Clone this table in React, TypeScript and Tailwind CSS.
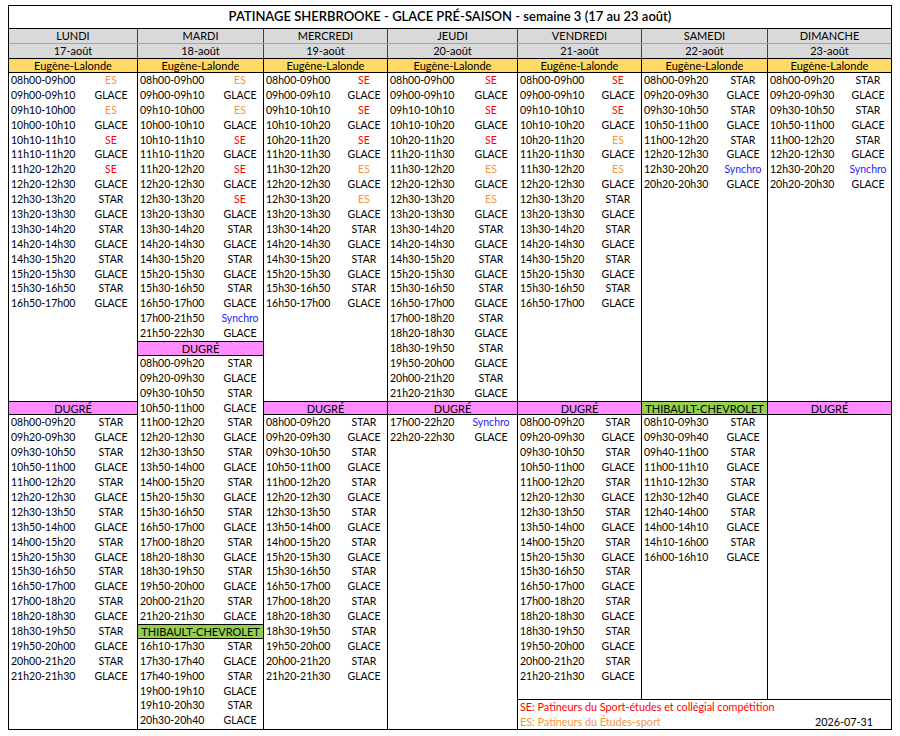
type Item =
  | { kind: 'row'; t: string; k: string }
  | { kind: 'blank' }
  | { kind: 'venue'; name: string; tone: 'pink' | 'green' };

const r = (t: string, k: string): Item => ({ kind: 'row', t, k });
const blank = (n: number): Item[] => Array.from({ length: n }, () => ({ kind: 'blank' }));
const venue = (name: string, tone: 'pink' | 'green'): Item => ({ kind: 'venue', name, tone });

// horaire standard a DUGRÉ (lundi, mardi, mercredi, vendredi)
const DUGRE_STD: Item[] = [
  r('08h00-09h20', 'STAR'),
  r('09h20-09h30', 'GLACE'),
  r('09h30-10h50', 'STAR'),
  r('10h50-11h00', 'GLACE'),
  r('11h00-12h20', 'STAR'),
  r('12h20-12h30', 'GLACE'),
  r('12h30-13h50', 'STAR'),
  r('13h50-14h00', 'GLACE'),
  r('14h00-15h20', 'STAR'),
  r('15h20-15h30', 'GLACE'),
  r('15h30-16h50', 'STAR'),
  r('16h50-17h00', 'GLACE'),
  r('17h00-18h20', 'STAR'),
  r('18h20-18h30', 'GLACE'),
  r('18h30-19h50', 'STAR'),
  r('19h50-20h00', 'GLACE'),
  r('20h00-21h20', 'STAR'),
  r('21h20-21h30', 'GLACE'),
];

const AFTERNOON: Item[] = [
  r('13h30-14h20', 'STAR'),
  r('14h20-14h30', 'GLACE'),
  r('14h30-15h20', 'STAR'),
  r('15h20-15h30', 'GLACE'),
  r('15h30-16h50', 'STAR'),
  r('16h50-17h00', 'GLACE'),
];

const WEEKEND: Item[] = [
  r('08h00-09h20', 'STAR'),
  r('09h20-09h30', 'GLACE'),
  r('09h30-10h50', 'STAR'),
  r('10h50-11h00', 'GLACE'),
  r('11h00-12h20', 'STAR'),
  r('12h20-12h30', 'GLACE'),
  r('12h30-20h20', 'Synchro'),
  r('20h20-20h30', 'GLACE'),
];

type Day = { name: string; date: string; typeW: string; span: string; items: Item[] };

const DAYS: Day[] = [
  {
    name: 'LUNDI',
    date: '17-août',
    typeW: 'w-[52px]',
    span: 'row-span-2',
    items: [
      r('08h00-09h00', 'ES'),
      r('09h00-09h10', 'GLACE'),
      r('09h10-10h00', 'ES'),
      r('10h00-10h10', 'GLACE'),
      r('10h10-11h10', 'SE'),
      r('11h10-11h20', 'GLACE'),
      r('11h20-12h20', 'SE'),
      r('12h20-12h30', 'GLACE'),
      r('12h30-13h20', 'STAR'),
      r('13h20-13h30', 'GLACE'),
      ...AFTERNOON,
      ...blank(6),
      venue('DUGRÉ', 'pink'),
      ...DUGRE_STD,
    ],
  },
  {
    name: 'MARDI',
    date: '18-août',
    typeW: 'w-[46px]',
    span: 'row-span-2',
    items: [
      r('08h00-09h00', 'ES'),
      r('09h00-09h10', 'GLACE'),
      r('09h10-10h00', 'ES'),
      r('10h00-10h10', 'GLACE'),
      r('10h10-11h10', 'SE'),
      r('11h10-11h20', 'GLACE'),
      r('11h20-12h20', 'SE'),
      r('12h20-12h30', 'GLACE'),
      r('12h30-13h20', 'SE'),
      r('13h20-13h30', 'GLACE'),
      ...AFTERNOON,
      r('17h00-21h50', 'Synchro'),
      r('21h50-22h30', 'GLACE'),
      venue('DUGRÉ', 'pink'),
      ...DUGRE_STD,
      venue('THIBAULT-CHEVROLET', 'green'),
      r('16h10-17h30', 'STAR'),
      r('17h30-17h40', 'GLACE'),
      r('17h40-19h00', 'STAR'),
      r('19h00-19h10', 'GLACE'),
      r('19h10-20h30', 'STAR'),
      r('20h30-20h40', 'GLACE'),
    ],
  },
  {
    name: 'MERCREDI',
    date: '19-août',
    typeW: 'w-[46px]',
    span: 'row-span-2',
    items: [
      r('08h00-09h00', 'SE'),
      r('09h00-09h10', 'GLACE'),
      r('09h10-10h10', 'SE'),
      r('10h10-10h20', 'GLACE'),
      r('10h20-11h20', 'SE'),
      r('11h20-11h30', 'GLACE'),
      r('11h30-12h20', 'ES'),
      r('12h20-12h30', 'GLACE'),
      r('12h30-13h20', 'ES'),
      r('13h20-13h30', 'GLACE'),
      ...AFTERNOON,
      ...blank(6),
      venue('DUGRÉ', 'pink'),
      ...DUGRE_STD,
    ],
  },
  {
    name: 'JEUDI',
    date: '20-août',
    typeW: 'w-[52px]',
    span: 'row-span-2',
    items: [
      r('08h00-09h00', 'SE'),
      r('09h00-09h10', 'GLACE'),
      r('09h10-10h10', 'SE'),
      r('10h10-10h20', 'GLACE'),
      r('10h20-11h20', 'SE'),
      r('11h20-11h30', 'GLACE'),
      r('11h30-12h20', 'ES'),
      r('12h20-12h30', 'GLACE'),
      r('12h30-13h20', 'ES'),
      r('13h20-13h30', 'GLACE'),
      ...AFTERNOON,
      r('17h00-18h20', 'STAR'),
      r('18h20-18h30', 'GLACE'),
      r('18h30-19h50', 'STAR'),
      r('19h50-20h00', 'GLACE'),
      r('20h00-21h20', 'STAR'),
      r('21h20-21h30', 'GLACE'),
      venue('DUGRÉ', 'pink'),
      r('17h00-22h20', 'Synchro'),
      r('22h20-22h30', 'GLACE'),
    ],
  },
  {
    name: 'VENDREDI',
    date: '21-août',
    typeW: 'w-[46px]',
    span: '',
    items: [
      r('08h00-09h00', 'SE'),
      r('09h00-09h10', 'GLACE'),
      r('09h10-10h10', 'SE'),
      r('10h10-10h20', 'GLACE'),
      r('10h20-11h20', 'ES'),
      r('11h20-11h30', 'GLACE'),
      r('11h30-12h20', 'ES'),
      r('12h20-12h30', 'GLACE'),
      r('12h30-13h20', 'STAR'),
      r('13h20-13h30', 'GLACE'),
      ...AFTERNOON,
      ...blank(6),
      venue('DUGRÉ', 'pink'),
      ...DUGRE_STD,
    ],
  },
  {
    name: 'SAMEDI',
    date: '22-août',
    typeW: 'w-[48px]',
    span: '',
    items: [
      ...WEEKEND,
      ...blank(14),
      venue('THIBAULT-CHEVROLET', 'green'),
      r('08h10-09h30', 'STAR'),
      r('09h30-09h40', 'GLACE'),
      r('09h40-11h00', 'STAR'),
      r('11h00-11h10', 'GLACE'),
      r('11h10-12h30', 'STAR'),
      r('12h30-12h40', 'GLACE'),
      r('12h40-14h00', 'STAR'),
      r('14h00-14h10', 'GLACE'),
      r('14h10-16h00', 'STAR'),
      r('16h00-16h10', 'GLACE'),
    ],
  },
  {
    name: 'DIMANCHE',
    date: '23-août',
    typeW: 'w-[46px]',
    span: '',
    items: [...WEEKEND, ...blank(14), venue('DUGRÉ', 'pink')],
  },
];

const COLS = 'grid grid-cols-[128px_126px_124px_130px_124px_126px_124px]';

function typeColor(k: string) {
  if (k === 'ES') return 'text-[#f7963a]';
  if (k === 'SE') return 'text-[#ff0000]';
  if (k === 'Synchro') return 'text-[#2222ff]';
  return 'text-black';
}

function DayColumn({ day, first }: { day: Day; first: boolean }) {
  return (
    <div className={`flex flex-col ${day.span} ${first ? '' : 'border-l border-black'}`}>
      {day.items.map((it, i) => {
        if (it.kind === 'blank') return <div key={i} className="h-[14.9px] shrink-0" />;
        if (it.kind === 'venue')
          return (
            <div
              key={i}
              className={`h-[14.9px] shrink-0 border-y border-black text-center text-[11px] leading-[13px] ${
                it.tone === 'pink' ? 'bg-[#ff8cff]' : 'bg-[#92d050]'
              }`}
            >
              {it.name}
            </div>
          );
        return (
          <div key={i} className="flex h-[14.9px] shrink-0 leading-[14.9px]">
            <span className="flex-1 pl-[2px]">{it.t}</span>
            <span className={`${day.typeW} text-center ${typeColor(it.k)}`}>{it.k}</span>
          </div>
        );
      })}
    </div>
  );
}

export default function App() {
  return (
    <div className="h-[736px] w-[900px] bg-white pl-[8px] pt-[5px] font-[Lato,sans-serif] text-[10.5px] text-black">
      <div className="w-[884px] border border-black">
        <div className="flex h-[23px] items-center justify-center border-b border-black text-[13px] font-semibold">
          PATINAGE SHERBROOKE - GLACE PRÉ-SAISON - semaine 3 (17 au 23 août)
        </div>
        <div className={`${COLS} h-[15px] border-b border-[#a6a6a6] bg-[#d9d9d9] text-[11px] leading-[14px]`}>
          {DAYS.map((d, i) => (
            <div key={d.name} className={`text-center ${i ? 'border-l border-[#404040]' : ''}`}>
              {d.name}
            </div>
          ))}
        </div>
        <div className={`${COLS} h-[15px] border-b border-black bg-[#d9d9d9] text-[11px] leading-[14px]`}>
          {DAYS.map((d, i) => (
            <div key={d.date} className={`text-center ${i ? 'border-l border-[#404040]' : ''}`}>
              {d.date}
            </div>
          ))}
        </div>
        <div className={`${COLS} h-[14px] border-b border-black bg-[#ffd966] text-[11px] leading-[13px]`}>
          {DAYS.map((d, i) => (
            <div key={d.name} className={`text-center ${i ? 'border-l border-black' : ''}`}>
              Eugène-Lalonde
            </div>
          ))}
        </div>
        <div className={`${COLS} grid-rows-[625.8px_29.8px]`}>
          {DAYS.map((d, i) => (
            <DayColumn key={d.name} day={d} first={i === 0} />
          ))}
          <div className="col-span-3 col-start-5 row-start-2 border-l border-t border-black text-[10.8px] leading-[14.9px]">
            <div className="pl-[2px] text-[#ff0000]">SE: Patineurs du Sport-études et collégial compétition</div>
            <div className="flex justify-between pl-[2px] pr-[18px]">
              <span className="text-[#f7963a]">ES: Patineurs du Études-sport</span>
              <span>2026-07-31</span>
            </div>
          </div>
        </div>
      </div>
    </div>
  );
}
